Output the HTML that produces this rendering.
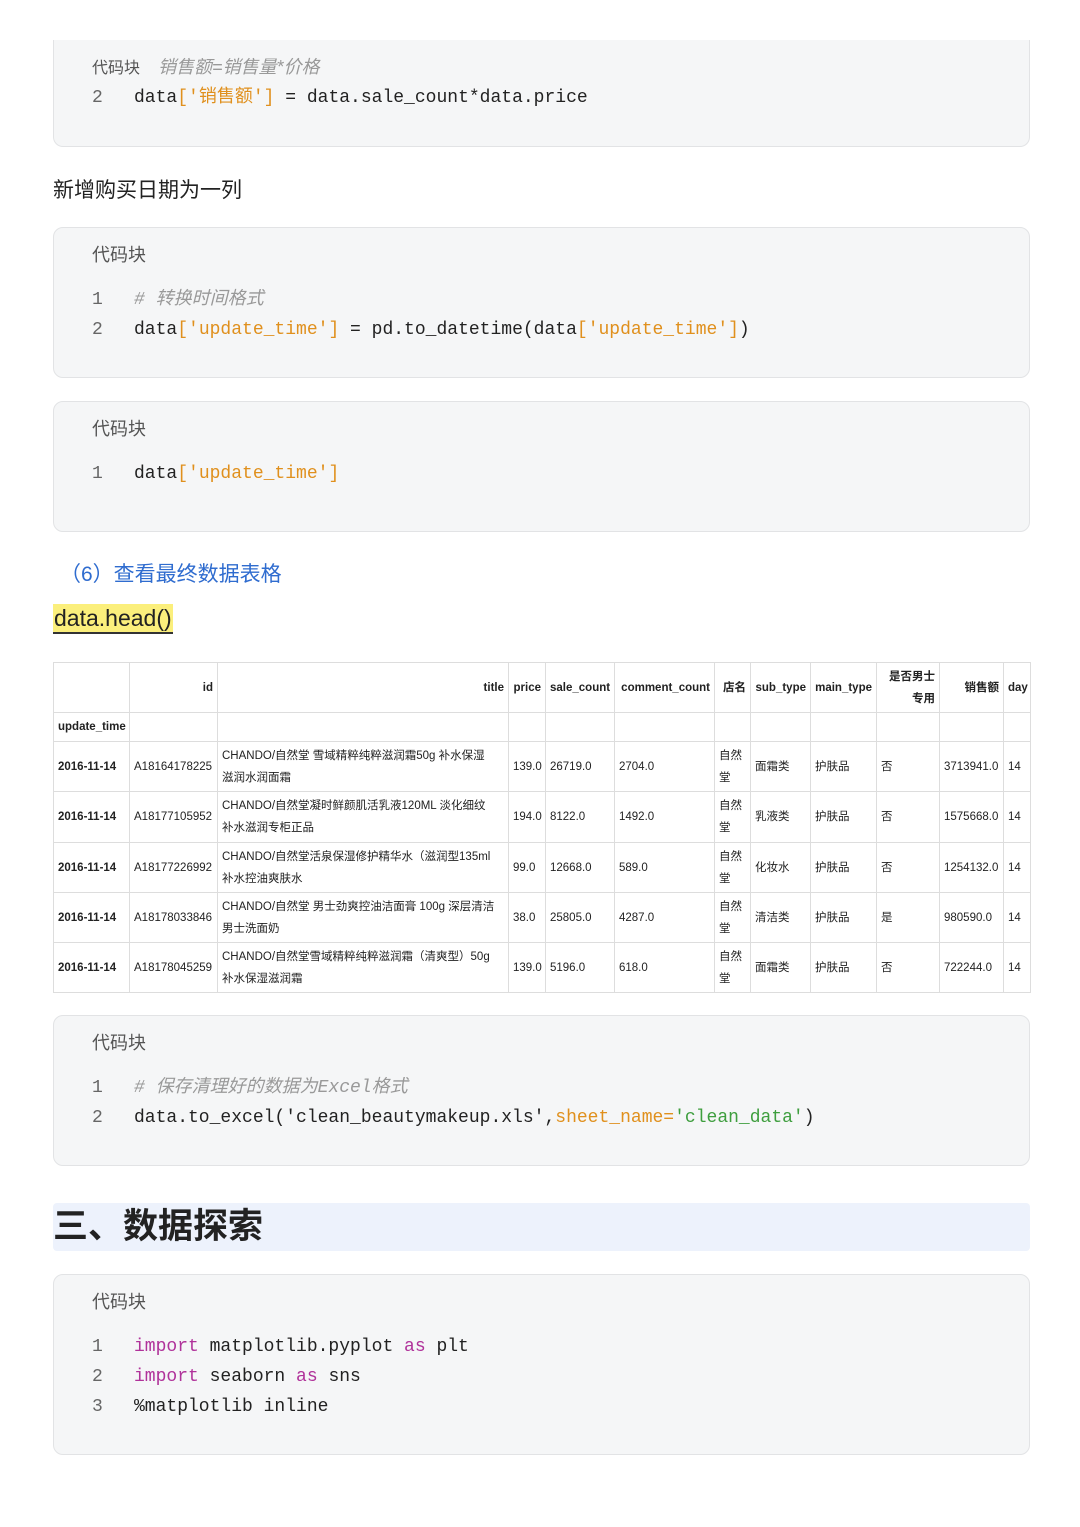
<!DOCTYPE html>
<html><head><meta charset="utf-8"><style>
*{margin:0;padding:0;box-sizing:border-box}
body{width:1080px;height:1527px;background:#fff;position:relative;overflow:hidden;font-family:"Liberation Sans","Noto Sans CJK SC",sans-serif;color:#222}
.cb{position:absolute;left:53px;width:977px;background:#f5f6f7;border:1px solid #e2e3e5;border-radius:10px}
.lbl{position:absolute;left:38px;font-size:18px;color:#555;line-height:26px}
.ln{position:absolute;left:38px;font-family:"Liberation Mono","Noto Sans CJK SC",monospace;font-size:18px;color:#666;line-height:30px}
.cd{position:absolute;left:80px;font-family:"Liberation Mono","Noto Sans CJK SC",monospace;font-size:18px;color:#222;white-space:pre;line-height:30px}
.o{color:#e0901d}.g{color:#3e9e3e}.c{color:#999;font-style:italic}.k{color:#b0329a}
.t{position:absolute;white-space:nowrap}
table{position:absolute;left:53px;top:662px;width:977px;border-collapse:collapse;table-layout:fixed;font-family:"Liberation Sans","Noto Sans CJK SC",sans-serif;font-size:11.5px;color:#222}
td,th{border:1px solid #ddd;padding:0 4px;line-height:22px;vertical-align:middle}
th{font-weight:bold;text-align:right}
td{text-align:left}
td.b{font-weight:bold}
</style></head><body>

<div class="cb" style="top:40px;height:107px;border-top:none;border-radius:0 0 10px 10px">
 <div class="t" style="left:38px;top:14px;font-size:16px;color:#555;line-height:30px">代码块</div>
 <div class="cd c" style="top:12px;left:104px;font-family:'Liberation Sans','Noto Sans CJK SC',sans-serif">销售额=销售量*价格</div>
 <div class="ln" style="top:43px">2</div>
 <div class="cd" style="top:43px">data<span class="o">['销售额']</span> = data.sale_count*data.price</div>
</div>

<div class="t" style="left:53px;top:174px;font-size:21px">新增购买日期为一列</div>

<div class="cb" style="top:227px;height:151px">
 <div class="lbl" style="top:14px">代码块</div>
 <div class="ln" style="top:57px">1</div><div class="cd c" style="top:57px"># 转换时间格式</div>
 <div class="ln" style="top:87px">2</div><div class="cd" style="top:87px">data<span class="o">['update_time']</span> = pd.to_datetime(data<span class="o">['update_time']</span>)</div>
</div>

<div class="cb" style="top:401px;height:131px">
 <div class="lbl" style="top:14px">代码块</div>
 <div class="ln" style="top:57px">1</div><div class="cd" style="top:57px">data<span class="o">['update_time']</span></div>
</div>

<div class="t" style="left:60px;top:558px;font-size:21px;color:#2f6ccf">（6）查看最终数据表格</div>
<div class="t" style="left:53px;top:604px;font-size:23px;background:#fbef7c;border-bottom:2px solid #333;line-height:28px;padding:0 1px">data.head()</div>

<table>
<colgroup><col style="width:76px"><col style="width:88px"><col style="width:291px"><col style="width:37px"><col style="width:69px"><col style="width:100px"><col style="width:36px"><col style="width:60px"><col style="width:66px"><col style="width:63px"><col style="width:64px"><col style="width:27px"></colgroup>
<tr style="height:50px"><th></th><th>id</th><th>title</th><th>price</th><th>sale_count</th><th>comment_count</th><th>店名</th><th>sub_type</th><th>main_type</th><th>是否男士<br>专用</th><th>销售额</th><th>day</th></tr>
<tr style="height:29px"><th style="text-align:left">update_time</th><th></th><th></th><th></th><th></th><th></th><th></th><th></th><th></th><th></th><th></th><th></th></tr>
<tr style="height:50px"><td class="b">2016-11-14</td><td>A18164178225</td><td>CHANDO/自然堂 雪域精粹纯粹滋润霜50g 补水保湿<br>滋润水润面霜</td><td>139.0</td><td>26719.0</td><td>2704.0</td><td>自然<br>堂</td><td>面霜类</td><td>护肤品</td><td>否</td><td>3713941.0</td><td>14</td></tr>
<tr style="height:51px"><td class="b">2016-11-14</td><td>A18177105952</td><td>CHANDO/自然堂凝时鲜颜肌活乳液120ML 淡化细纹<br>补水滋润专柜正品</td><td>194.0</td><td>8122.0</td><td>1492.0</td><td>自然<br>堂</td><td>乳液类</td><td>护肤品</td><td>否</td><td>1575668.0</td><td>14</td></tr>
<tr style="height:50px"><td class="b">2016-11-14</td><td>A18177226992</td><td>CHANDO/自然堂活泉保湿修护精华水（滋润型135ml<br>补水控油爽肤水</td><td>99.0</td><td>12668.0</td><td>589.0</td><td>自然<br>堂</td><td>化妆水</td><td>护肤品</td><td>否</td><td>1254132.0</td><td>14</td></tr>
<tr style="height:50px"><td class="b">2016-11-14</td><td>A18178033846</td><td>CHANDO/自然堂 男士劲爽控油洁面膏 100g 深层清洁<br>男士洗面奶</td><td>38.0</td><td>25805.0</td><td>4287.0</td><td>自然<br>堂</td><td>清洁类</td><td>护肤品</td><td>是</td><td>980590.0</td><td>14</td></tr>
<tr style="height:50px"><td class="b">2016-11-14</td><td>A18178045259</td><td>CHANDO/自然堂雪域精粹纯粹滋润霜（清爽型）50g<br>补水保湿滋润霜</td><td>139.0</td><td>5196.0</td><td>618.0</td><td>自然<br>堂</td><td>面霜类</td><td>护肤品</td><td>否</td><td>722244.0</td><td>14</td></tr>
</table>

<div class="cb" style="top:1015px;height:151px">
 <div class="lbl" style="top:14px">代码块</div>
 <div class="ln" style="top:57px">1</div><div class="cd c" style="top:57px"># 保存清理好的数据为Excel格式</div>
 <div class="ln" style="top:87px">2</div><div class="cd" style="top:87px">data.to_excel('clean_beautymakeup.xls',<span class="o">sheet_name=</span><span class="g">'clean_data'</span>)</div>
</div>

<div style="position:absolute;left:53px;top:1203px;width:977px;height:48px;background:#edf2fc;border-radius:4px"></div>
<div class="t" style="left:53px;top:1204px;font-size:35px;font-weight:bold;color:#222;line-height:46px">三、数据探索</div>

<div class="cb" style="top:1274px;height:181px">
 <div class="lbl" style="top:14px">代码块</div>
 <div class="ln" style="top:57px">1</div><div class="cd" style="top:57px"><span class="k">import</span> matplotlib.pyplot <span class="k">as</span> plt</div>
 <div class="ln" style="top:87px">2</div><div class="cd" style="top:87px"><span class="k">import</span> seaborn <span class="k">as</span> sns</div>
 <div class="ln" style="top:117px">3</div><div class="cd" style="top:117px">%matplotlib inline</div>
</div>
</body></html>
